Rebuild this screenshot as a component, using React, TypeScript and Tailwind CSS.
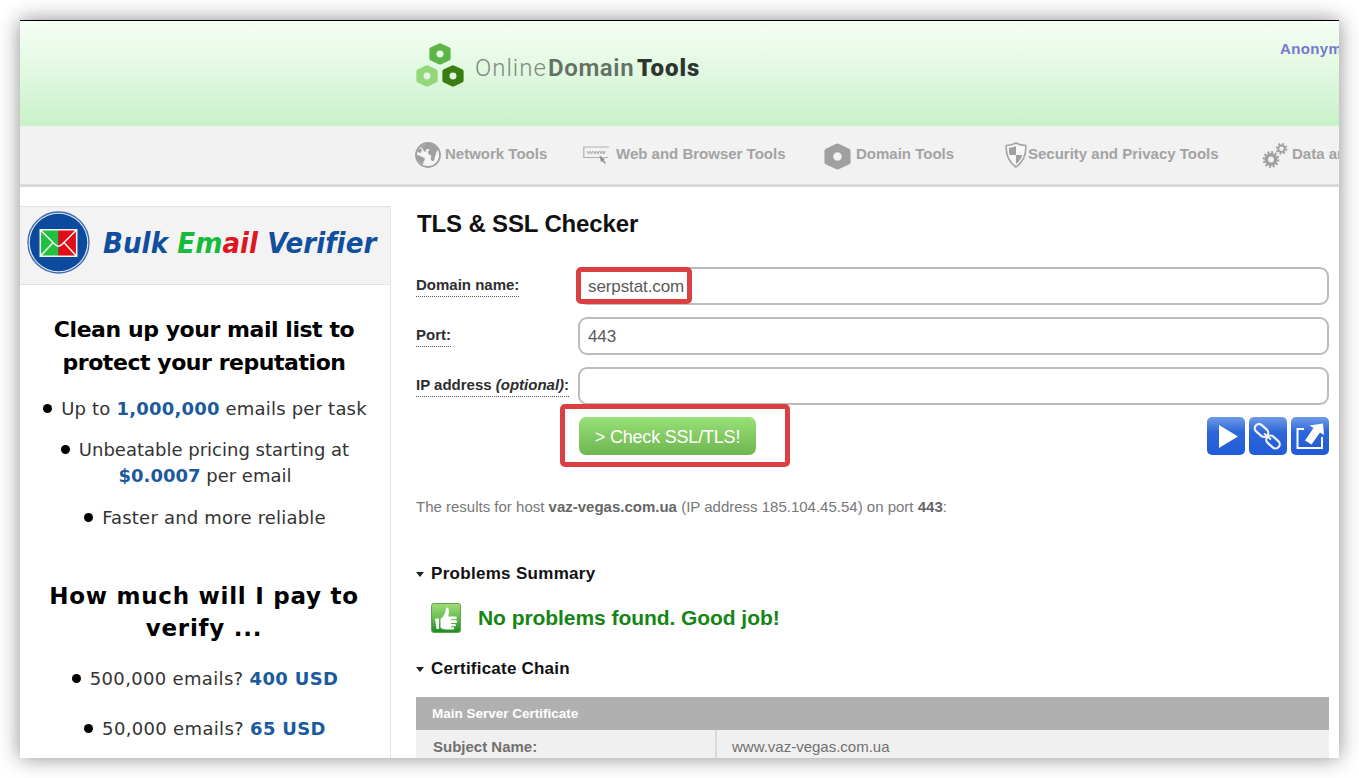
import type { ReactNode } from "react";

function Hexagon({ className }: { className: string }) {
  return (
    <svg viewBox="0 0 24 24" preserveAspectRatio="none" className={className} fill="currentColor">
      <path
        fillRule="evenodd"
        d="M12 .4 Q12.8 .4 13.6 .9 L22.4 5 Q23.6 5.8 23.6 7 V17 Q23.6 18.2 22.6 18.9 L13.4 23.2 Q12 23.8 10.6 23.2 L1.4 18.9 Q.4 18.2 .4 17 V7 Q.4 5.8 1.6 5 L10.4 .9 Q11.2 .4 12 .4 Z M12 8.2 a3.8 3.8 0 1 0 0 7.6 a3.8 3.8 0 1 0 0-7.6 Z"
      />
    </svg>
  );
}

function Logo() {
  return (
    <div className="flex items-center">
      <div className="flex w-[48px] flex-col items-center">
        <Hexagon className="h-[22px] w-[22px] text-[#5cb545]" />
        <div className="flex gap-[4px]">
          <Hexagon className="h-[22px] w-[22px] text-[#92d878]" />
          <Hexagon className="h-[22px] w-[22px] text-[#3a7d13]" />
        </div>
      </div>
      <div className="ml-[11px] mt-[5px] flex whitespace-nowrap font-['Roboto',sans-serif] text-[24px] leading-7">
        <span className="w-[73px] font-light tracking-[1px] text-[#7d8a7e]">Online</span>
        <span className="w-[89px] font-semibold tracking-[0.6px] text-[#647064]">Domain</span>
        <span className="font-black tracking-[0.9px] text-[#2d352e]">Tools</span>
      </div>
    </div>
  );
}

function GlobeIcon() {
  return (
    <svg viewBox="0 0 26 26" className="size-[26px]">
      <circle cx="13" cy="13" r="12" fill="#f6f6f6" stroke="#a0a0a0" strokeWidth="1.8" />
      <path
        d="M5 5 Q12 -1 19 3 Q22 5 23 8 L21.5 9.5 L20.5 13 L19 18.5 Q17.5 20 16 18 Q15.5 15 16.5 13.5 Q13 13 13 10 Q13.5 8 15 7.5 L12 7 L10.5 8.5 L11.5 9.5 L9 9.5 L7.5 6.5 Z"
        fill="#a0a0a0"
      />
      <path d="M1 12.5 L4 13.5 L9.5 16 Q10.5 18 8.5 19.5 L8 22.5 Q2 20 1 12.5 Z M4 6 L7 7.5 L6 11 L2 10 Z" fill="#a0a0a0" />
    </svg>
  );
}

function BrowserIcon() {
  return (
    <svg viewBox="0 0 26 20" className="h-5 w-[26px]">
      <path d="M26 2 H.8 V12.5 H18" fill="none" stroke="#b0b0b0" strokeWidth="1.2" />
      <path d="M25 12.5 H21" stroke="#b0b0b0" />
      <path
        d="M4 6 l1.5 3 1.5-3 1.5 3 1.5-3 M10.5 6 l1.5 3 1.5-3 1.5 3 1.5-3 M17 6 l1.3 3 1.3-3 1.3 3 1.3-3"
        fill="none"
        stroke="#a5a5a5"
        strokeWidth="1"
      />
      <path d="M16.5 10.5 L22 14 L20.5 15 L23 18 L21.5 18.8 L19.5 16 L18 17 Z" fill="#8f8f8f" />
    </svg>
  );
}

function ShieldIcon() {
  return (
    <svg viewBox="0 0 22 26" className="h-[26px] w-[22px]">
      <path
        d="M11 1 Q15 3.2 20.8 3.5 Q21.5 18 11 25 Q.5 18 1.2 3.5 Q7 3.2 11 1 Z"
        fill="#f8f8f8"
        stroke="#a3a3a3"
        strokeWidth="1.6"
      />
      <path d="M11 4 V13 H4.6 Q3.7 10 4 5.8 Q8 5.6 11 4 Z M11 13 H17.4 Q15.5 19 11 22 Z" fill="#a0a0a0" />
    </svg>
  );
}

function GearsIcon() {
  return (
    <svg viewBox="0 0 26 26" className="size-[26px]" fill="none" stroke="#a0a0a0">
      <circle cx="9" cy="17.5" r="4.7" strokeWidth="3.6" />
      <circle cx="9" cy="17.5" r="7.3" strokeWidth="2.2" strokeDasharray="2 1.82" />
      <circle cx="19.5" cy="6.8" r="3.3" strokeWidth="2" />
      <circle cx="19.5" cy="6.8" r="5" strokeWidth="1.8" strokeDasharray="1.9 2.03" />
    </svg>
  );
}

function NavItem({ className, children }: { className?: string; children: ReactNode }) {
  return (
    <a
      href="#"
      className={`flex shrink-0 items-center whitespace-nowrap text-[15px] font-bold text-[#a3a3a3] ${className ?? ""}`}
    >
      {children}
    </a>
  );
}

function Header() {
  return (
    <header>
      <div className="flex h-[106px] items-start justify-between border-t border-black bg-linear-to-b from-[#f6fef6] to-[#c9f2c9] pl-[396px]">
        <div className="mt-[22px]">
          <Logo />
        </div>
        <div className="mt-[18px] w-[59px] overflow-hidden text-[15px] font-bold leading-5 tracking-[0.35px] text-[#7679cf]">
          Anonymous
        </div>
      </div>
      <nav className="flex h-[61px] overflow-hidden border-b-[3px] border-[#d9d9d9] bg-[#f2f2f2] pl-[395px]">
        <NavItem className="w-[168px]">
          <GlobeIcon />
          <span className="mb-px ml-[4px]">Network Tools</span>
        </NavItem>
        <NavItem className="w-[241px]">
          <BrowserIcon />
          <span className="mb-px ml-[7px]">Web and Browser Tools</span>
        </NavItem>
        <NavItem className="w-[181px]">
          <Hexagon className="mt-[2px] size-[27px] text-[#a0a0a0]" />
          <span className="mb-px ml-[5px]">Domain Tools</span>
        </NavItem>
        <NavItem className="w-[257px]">
          <ShieldIcon />
          <span className="mb-px ml-[1px]">Security and Privacy Tools</span>
        </NavItem>
        <NavItem>
          <GearsIcon />
          <span className="mb-px ml-[4px]">Data and</span>
        </NavItem>
      </nav>
    </header>
  );
}

function Bullet() {
  return <span className="mr-[9px] inline-block size-[9px] rounded-full bg-black align-[2px]" />;
}

function Blue({ children }: { children: ReactNode }) {
  return <b className="font-bold text-[#1c5a9e]">{children}</b>;
}

function Sidebar() {
  return (
    <aside className="mt-[19px] w-[371px] shrink-0 border-r border-[#e3e3e3] text-center font-['DejaVu_Sans',sans-serif] text-[18px] leading-[26px] text-[#333]">
      <div className="flex h-[79px] items-start border-y border-[#e2e2e2] bg-[#f3f3f3] pl-[7px] pt-[4px]">
        <svg viewBox="0 0 64 64" className="size-[63px] shrink-0">
          <circle cx="32" cy="32" r="31" fill="#dfe8f4" stroke="#3f6cb0" strokeWidth="1.4" />
          <circle cx="32" cy="32" r="29.2" fill="#0b4a9c" />
          <rect x="13.5" y="19" width="18.5" height="27" fill="#22c040" />
          <rect x="32" y="19" width="18.5" height="27" fill="#e30d18" />
          <path
            d="M13.5 19 H50.5 V46 H13.5 Z M13.5 19 L29 34.5 Q32 37 35 34.5 L50.5 19 M13.5 46 L26.5 32 M50.5 46 L37.5 32"
            fill="none"
            stroke="#f3f3ee"
            strokeWidth="1.6"
          />
        </svg>
        <div className="ml-[13px] mt-[14px] whitespace-nowrap font-['DejaVu_Sans_Condensed','DejaVu_Sans',sans-serif] text-[29px] font-bold italic leading-9 tracking-[0.08px] text-[#0f4f9e]">
          Bulk <span className="text-[#17bb3b]">Em</span>
          <span className="text-[#df1620]">ail</span> Verifier
        </div>
      </div>
      <h2 className="mt-[28px] whitespace-nowrap pr-[2px] text-[22px] font-bold leading-[33px] tracking-[-0.45px] text-black">
        Clean up your mail list to
        <br />
        protect your reputation
      </h2>
      <ul className="whitespace-nowrap">
        <li className="mt-[17px] tracking-[0.2px]">
          <Bullet />
          Up to <Blue>1,000,000</Blue> emails per task
        </li>
        <li className="mt-[15px]">
          <Bullet />
          Unbeatable pricing starting at
          <br />
          <Blue>$0.0007</Blue> per email
        </li>
        <li className="mt-[16px] tracking-[0.2px]">
          <Bullet />
          Faster and more reliable
        </li>
      </ul>
      <h2 className="mt-[49px] whitespace-nowrap pr-[2px] text-[23px] font-bold leading-8 tracking-[0.75px] text-black">
        How much will I pay to
        <br />
        verify ...
      </h2>
      <ul className="whitespace-nowrap">
        <li className="mt-[22px] tracking-[0.33px]">
          <Bullet />
          500,000 emails? <Blue>400 USD</Blue>
        </li>
        <li className="mt-[24px] tracking-[0.33px]">
          <Bullet />
          50,000 emails? <Blue>65 USD</Blue>
        </li>
      </ul>
    </aside>
  );
}

function Field({ label, value }: { label: ReactNode; value: string }) {
  return (
    <div className="mb-[12px] flex h-[38px]">
      <div className="w-[162px] shrink-0 pt-[6px]">
        <label className="inline-block h-[24px] whitespace-nowrap border-b border-dotted border-[#555] text-[15px] font-bold leading-[23px] text-[#2e2e2e]">
          {label}
        </label>
      </div>
      <input
        type="text"
        defaultValue={value}
        className="w-[751px] rounded-[9px] border-2 border-[#bcbcbc] bg-white px-[8px] pt-[2px] text-[17px] tracking-[-0.1px] text-[#5a5a5a]"
      />
    </div>
  );
}

function ShareButton({ children }: { children: ReactNode }) {
  return (
    <button className="flex h-[38px] w-[38px] items-center justify-center rounded-[5px] bg-linear-to-b from-[#6f9ae6] via-[#2d66d9] via-40% to-[#1f5bd8]">
      {children}
    </button>
  );
}

function SectionTitle({ className, children }: { className: string; children: ReactNode }) {
  return (
    <h3 className={`flex items-center text-[17px] font-bold leading-6 text-[#111] ${className}`}>
      <span className="mr-[6px] border-x-[4.5px] border-t-[5px] border-x-transparent border-t-[#222]" />
      <span className="ml-px">{children}</span>
    </h3>
  );
}

function ThumbIcon() {
  return (
    <svg viewBox="0 0 30 30" className="size-[30px]">
      <defs>
        <linearGradient id="thumb" x1="0" y1="0" x2="0" y2="1">
          <stop offset="0" stopColor="#a2dc78" />
          <stop offset=".5" stopColor="#66bd50" />
          <stop offset="1" stopColor="#1e8a22" />
        </linearGradient>
      </defs>
      <rect x=".5" y=".5" width="29" height="29" rx="2.5" fill="url(#thumb)" stroke="#5fa550" />
      <path d="M4 15.5 H8 V26 H5.5 Z" fill="#fff" />
      <path
        d="M9.5 16 Q14.5 12 15 5.5 Q15.6 3.6 17.2 5 Q18.8 8.5 17.2 13.5 H25 Q26.8 14.8 25 16.3 H20 V17.3 H25.5 Q26.8 18.6 25.5 19.9 H20 V20.9 H24.5 Q25.6 22 24.5 23.3 H20 V24.2 H23 Q24 25.4 22.6 26.5 H15 Q11 26.5 9.5 24.5 Z"
        fill="#fff"
      />
    </svg>
  );
}

function Main() {
  return (
    <main className="ml-[25px] w-[913px] shrink-0">
      <h1 className="mt-[21px] pl-px text-[24px] font-bold leading-8 tracking-[-0.15px] text-[#111]">
        TLS &amp; SSL Checker
      </h1>
      <form className="mt-[27px]" onSubmit={(e) => e.preventDefault()}>
        <Field label="Domain name:" value="serpstat.com" />
        <Field label="Port:" value="443" />
        <Field
          label={
            <>
              IP address <i>(optional)</i>:
            </>
          }
          value=""
        />
        <div className="flex justify-between pl-[163px]">
          <button className="h-[38px] w-[177px] rounded-[7px] bg-linear-to-b from-[#98e077] to-[#6fb550] pt-[2px] text-[18px] tracking-[-0.2px] text-white">
            &gt; Check SSL/TLS!
          </button>
          <div className="flex gap-[4px]">
            <ShareButton>
              <svg viewBox="0 0 38 38" className="size-[38px]">
                <path d="M12 8 L31 19.5 L12 31 Z" fill="#fff" />
              </svg>
            </ShareButton>
            <ShareButton>
              <svg viewBox="0 0 38 38" className="size-[38px]" fill="none" stroke="#f4f4f8" strokeWidth="2.2">
                <rect x="-7.6" y="-4.2" width="15.2" height="8.4" rx="4.2" transform="translate(12.5 13.5) rotate(42)" />
                <rect x="-7.6" y="-4.2" width="15.2" height="8.4" rx="4.2" transform="translate(24 25) rotate(42)" />
                <path d="M15 16.5 L22 22.5" strokeWidth="2" />
              </svg>
            </ShareButton>
            <ShareButton>
              <svg viewBox="0 0 38 38" className="size-[38px]">
                <path d="M13 12 H6.5 V31 H31 V20" fill="none" stroke="#fff" strokeWidth="2" />
                <path d="M18.5 8.5 L32 6.5 L33 18 L29 15.5 L20.5 27.5 L14 23.5 L22.5 11 Z" fill="#fff" />
              </svg>
            </ShareButton>
          </div>
        </div>
      </form>
      <p className="mt-[40px] whitespace-nowrap text-[15px] leading-6 text-[#777]">
        The results for host <b className="text-[#666]">vaz-vegas.com.ua</b> (IP address 185.104.45.54) on port{" "}
        <b className="text-[#666]">443</b>:
      </p>
      <SectionTitle className="mt-[43px] tracking-[0.3px]">Problems Summary</SectionTitle>
      <div className="ml-[15px] mt-[17px] flex h-[30px] items-center gap-[17px]">
        <ThumbIcon />
        <span className="whitespace-nowrap text-[21px] font-bold tracking-[-0.06px] text-[#158515]">
          No problems found. Good job!
        </span>
      </div>
      <SectionTitle className="mt-[24px] tracking-[0.22px]">Certificate Chain</SectionTitle>
      <div className="mt-[16px]">
        <div className="h-[33px] bg-[#b0b0b0] pl-[16px] text-[13.5px] font-bold leading-[33px] text-white">
          Main Server Certificate
        </div>
        <div className="flex h-[34px] bg-[#f0f0f0] text-[15px] leading-[34px] text-[#707070]">
          <div className="w-[301px] border-r-2 border-[#dadada] pl-[17px] font-bold">Subject Name:</div>
          <div className="pl-[15px]">www.vaz-vegas.com.ua</div>
        </div>
      </div>
    </main>
  );
}

export default function App() {
  return (
    <div className="h-[778px] w-[1359px] overflow-hidden bg-white p-[20px] font-['Liberation_Sans',Arial,sans-serif]">
      <div className="relative h-[738px] w-[1319px] shadow-[0_0_20px_rgba(0,0,0,0.45)]">
        <div className="h-full overflow-hidden bg-white">
          <Header />
          <div className="flex h-[571px] overflow-hidden">
            <Sidebar />
            <Main />
          </div>
        </div>
        {/* highlight frames */}
        <div className="absolute left-[556px] top-[247px] h-[37px] w-[116px] rounded-[5px] border-[5px] border-[#dc3f42]" />
        <div className="absolute left-[540px] top-[384px] h-[63px] w-[230px] rounded-[5px] border-[5px] border-[#dc3f42]" />
      </div>
    </div>
  );
}
